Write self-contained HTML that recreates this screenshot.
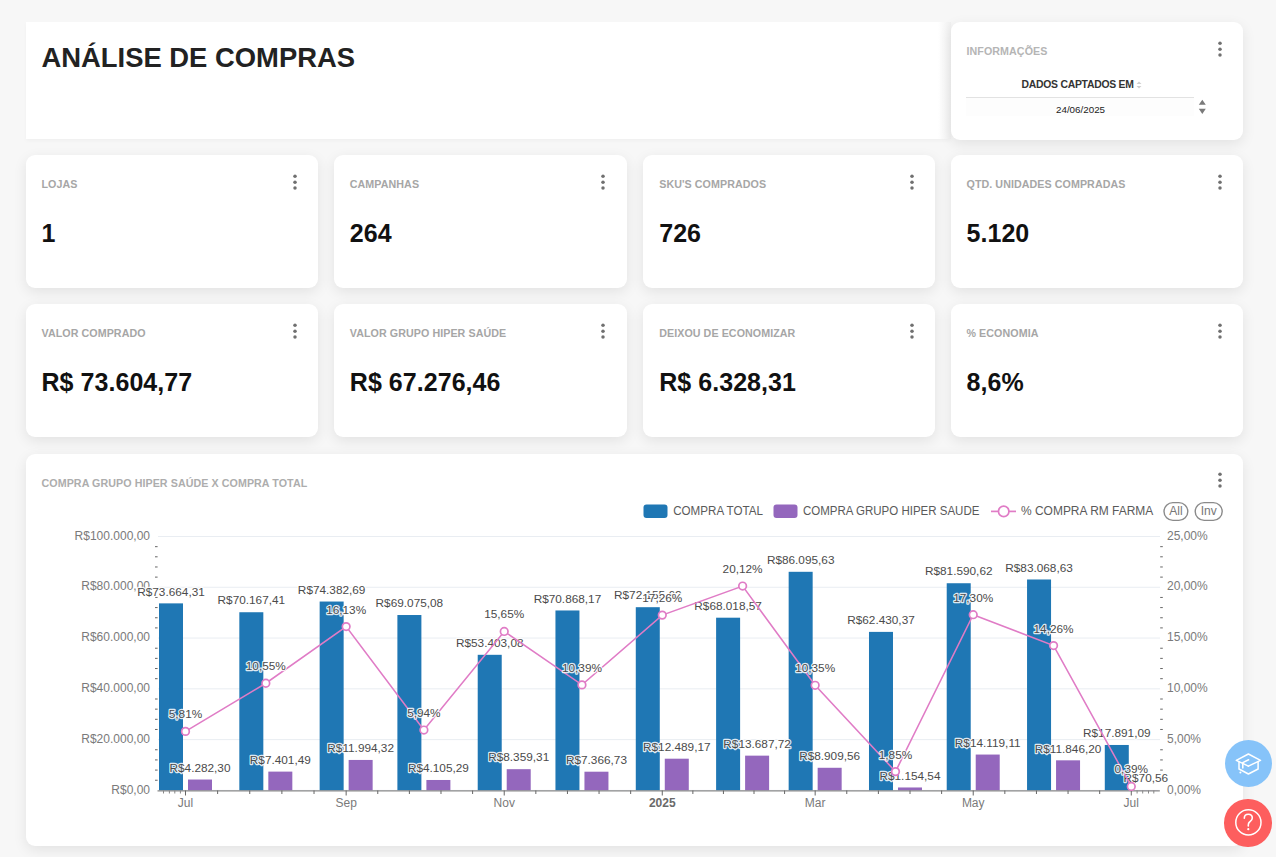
<!DOCTYPE html>
<html><head><meta charset="utf-8">
<style>
html,body{margin:0;padding:0;}
body{width:1276px;height:857px;overflow:hidden;background:#f7f7f7;font-family:"Liberation Sans",sans-serif;position:relative;}
.card{position:absolute;background:#fff;border-radius:9px;box-shadow:0 4px 14px rgba(0,0,0,0.085);}
.kpi{width:292.3px;height:133px;}
.ct{position:absolute;left:15.5px;top:23px;font-size:10.7px;font-weight:bold;color:#a6a6a6;letter-spacing:0.07px;line-height:12px;white-space:nowrap;}
.kb{position:absolute;left:266px;top:19px;}
.val{position:absolute;left:15.5px;top:63px;font-size:25px;font-weight:bold;color:#111;line-height:30px;white-space:nowrap;letter-spacing:0.05px;}
#title{left:26px;top:22px;width:925px;height:117px;border-radius:0;box-shadow:0 2px 4px rgba(0,0,0,0.03);}
#title h1{margin:0;position:absolute;left:15.5px;top:20px;font-size:27.4px;line-height:32px;color:#222;font-weight:bold;white-space:nowrap;}
#info{left:951px;top:22px;width:292px;height:118px;}
#chart{left:26px;top:454px;width:1217px;height:392px;}
svg.chart{position:absolute;left:0;top:0;}
.ax{font-size:12px;fill:#7a7a7a;}
.lg{font-size:12px;fill:#5a5a5a;}
.pill{font-size:12px;fill:#777;}
.ax.b{font-weight:bold;fill:#6a6a6a;}
.dl{font-size:11.8px;fill:#4b4b4b;stroke:rgba(255,255,255,0.85);stroke-width:2.4px;paint-order:stroke;stroke-linejoin:round;}
.fab{position:absolute;width:47px;height:47px;border-radius:50%;}
#dh{position:absolute;left:70.5px;top:56.5px;letter-spacing:-0.25px;font-size:10.4px;font-weight:bold;color:#333;line-height:12px;white-space:nowrap;}
#dline{position:absolute;left:15px;top:75px;width:228px;height:1px;background:#e2e2e2;}
#drow{position:absolute;left:15px;top:76px;width:228px;height:18px;background:#fdfdfd;}
#dval{position:absolute;left:105px;top:82px;font-size:9.8px;color:#222;line-height:12px;white-space:nowrap;}
</style></head><body>
<div class="card" id="title"><h1>ANÁLISE DE COMPRAS</h1><div style="position:absolute;left:912px;top:0;width:13px;bottom:0;background:linear-gradient(to right,rgba(242,242,242,0),#f0f0f0)"></div></div>
<div class="card" id="info">
  <div class="ct" style="top:23px;color:#b5b5b5">INFORMAÇÕES</div><svg class="kb" width="6" height="17" viewBox="0 0 6 17"><circle cx="3" cy="2.3" r="1.75" fill="#707070"/><circle cx="3" cy="8.2" r="1.75" fill="#707070"/><circle cx="3" cy="14.1" r="1.75" fill="#707070"/></svg>
  <div id="dh">DADOS CAPTADOS EM</div>
  <svg style="position:absolute;left:184px;top:58px" width="8" height="10" viewBox="0 0 8 10"><path d="M4 1.5 L6.5 4 L1.5 4 Z M4 8.5 L6.5 6 L1.5 6 Z" fill="#d0d0d0"/></svg>
  <div id="dline"></div>
  <div id="drow"></div>
  <div id="dval">24/06/2025</div>
  <svg style="position:absolute;left:246px;top:77px" width="10" height="16" viewBox="0 0 10 16"><path d="M5.3 0.8 L8.8 5.7 L1.8 5.7 Z M5.3 15 L8.8 9.8 L1.8 9.8 Z" fill="#7a7a7a"/></svg>
</div>
<div class="card kpi" style="left:26px;top:155px"><div class="ct">LOJAS</div><svg class="kb" width="6" height="17" viewBox="0 0 6 17"><circle cx="3" cy="2.3" r="1.75" fill="#707070"/><circle cx="3" cy="8.2" r="1.75" fill="#707070"/><circle cx="3" cy="14.1" r="1.75" fill="#707070"/></svg><div class="val">1</div></div>
<div class="card kpi" style="left:334.3px;top:155px"><div class="ct">CAMPANHAS</div><svg class="kb" width="6" height="17" viewBox="0 0 6 17"><circle cx="3" cy="2.3" r="1.75" fill="#707070"/><circle cx="3" cy="8.2" r="1.75" fill="#707070"/><circle cx="3" cy="14.1" r="1.75" fill="#707070"/></svg><div class="val">264</div></div>
<div class="card kpi" style="left:642.5px;top:155px"><div class="ct" style="margin-left:1.2px">SKU'S COMPRADOS</div><svg class="kb" width="6" height="17" viewBox="0 0 6 17"><circle cx="3" cy="2.3" r="1.75" fill="#707070"/><circle cx="3" cy="8.2" r="1.75" fill="#707070"/><circle cx="3" cy="14.1" r="1.75" fill="#707070"/></svg><div class="val" style="margin-left:1.2px">726</div></div>
<div class="card kpi" style="left:951px;top:155px"><div class="ct">QTD. UNIDADES COMPRADAS</div><svg class="kb" width="6" height="17" viewBox="0 0 6 17"><circle cx="3" cy="2.3" r="1.75" fill="#707070"/><circle cx="3" cy="8.2" r="1.75" fill="#707070"/><circle cx="3" cy="14.1" r="1.75" fill="#707070"/></svg><div class="val">5.120</div></div>
<div class="card kpi" style="left:26px;top:304.2px"><div class="ct">VALOR COMPRADO</div><svg class="kb" width="6" height="17" viewBox="0 0 6 17"><circle cx="3" cy="2.3" r="1.75" fill="#707070"/><circle cx="3" cy="8.2" r="1.75" fill="#707070"/><circle cx="3" cy="14.1" r="1.75" fill="#707070"/></svg><div class="val">R$ 73.604,77</div></div>
<div class="card kpi" style="left:334.3px;top:304.2px"><div class="ct">VALOR GRUPO HIPER SAÚDE</div><svg class="kb" width="6" height="17" viewBox="0 0 6 17"><circle cx="3" cy="2.3" r="1.75" fill="#707070"/><circle cx="3" cy="8.2" r="1.75" fill="#707070"/><circle cx="3" cy="14.1" r="1.75" fill="#707070"/></svg><div class="val">R$ 67.276,46</div></div>
<div class="card kpi" style="left:642.5px;top:304.2px"><div class="ct" style="margin-left:1.2px">DEIXOU DE ECONOMIZAR</div><svg class="kb" width="6" height="17" viewBox="0 0 6 17"><circle cx="3" cy="2.3" r="1.75" fill="#707070"/><circle cx="3" cy="8.2" r="1.75" fill="#707070"/><circle cx="3" cy="14.1" r="1.75" fill="#707070"/></svg><div class="val" style="margin-left:1.2px">R$ 6.328,31</div></div>
<div class="card kpi" style="left:951px;top:304.2px"><div class="ct">% ECONOMIA</div><svg class="kb" width="6" height="17" viewBox="0 0 6 17"><circle cx="3" cy="2.3" r="1.75" fill="#707070"/><circle cx="3" cy="8.2" r="1.75" fill="#707070"/><circle cx="3" cy="14.1" r="1.75" fill="#707070"/></svg><div class="val">8,6%</div></div>
<div class="card" id="chart"><div class="ct" style="top:23px;color:#adadad">COMPRA GRUPO HIPER SAÚDE X COMPRA TOTAL</div><svg class="kb" style="top:18.4px;left:1190.8px" width="6" height="17" viewBox="0 0 6 17"><circle cx="3" cy="2.3" r="1.75" fill="#707070"/><circle cx="3" cy="8.2" r="1.75" fill="#707070"/><circle cx="3" cy="14.1" r="1.75" fill="#707070"/></svg></div>
<div class="fab" style="left:1224.5px;top:740px;background:#86c3f9"></div>
<div class="fab" style="left:1224.2px;top:799px;width:47.5px;height:47.5px;background:#fd5e5e"></div>
<svg class="chart" width="1276" height="857" viewBox="0 0 1276 857" style="position:absolute;left:0;top:0">
<line x1="158" y1="790.40" x2="1160" y2="790.40" stroke="#e9edf2" stroke-width="1"/>
<line x1="158" y1="739.62" x2="1160" y2="739.62" stroke="#e9edf2" stroke-width="1"/>
<line x1="158" y1="688.84" x2="1160" y2="688.84" stroke="#e9edf2" stroke-width="1"/>
<line x1="158" y1="638.06" x2="1160" y2="638.06" stroke="#e9edf2" stroke-width="1"/>
<line x1="158" y1="587.28" x2="1160" y2="587.28" stroke="#e9edf2" stroke-width="1"/>
<line x1="158" y1="536.50" x2="1160" y2="536.50" stroke="#e9edf2" stroke-width="1"/>
<text x="150" y="793.50" text-anchor="end" class="ax">R$0,00</text>
<text x="1167" y="793.50" text-anchor="start" class="ax">0,00%</text>
<text x="150" y="742.72" text-anchor="end" class="ax">R$20.000,00</text>
<text x="1167" y="742.72" text-anchor="start" class="ax">5,00%</text>
<text x="150" y="691.94" text-anchor="end" class="ax">R$40.000,00</text>
<text x="1167" y="691.94" text-anchor="start" class="ax">10,00%</text>
<text x="150" y="641.16" text-anchor="end" class="ax">R$60.000,00</text>
<text x="1167" y="641.16" text-anchor="start" class="ax">15,00%</text>
<text x="150" y="590.38" text-anchor="end" class="ax">R$80.000,00</text>
<text x="1167" y="590.38" text-anchor="start" class="ax">20,00%</text>
<text x="150" y="539.60" text-anchor="end" class="ax">R$100.000,00</text>
<text x="1167" y="539.60" text-anchor="start" class="ax">25,00%</text>
<line x1="155" y1="780.24" x2="157.6" y2="780.24" stroke="#666" stroke-width="1"/>
<line x1="1160.2" y1="780.24" x2="1162.8" y2="780.24" stroke="#666" stroke-width="1"/>
<line x1="155" y1="770.09" x2="157.6" y2="770.09" stroke="#666" stroke-width="1"/>
<line x1="1160.2" y1="770.09" x2="1162.8" y2="770.09" stroke="#666" stroke-width="1"/>
<line x1="155" y1="759.93" x2="157.6" y2="759.93" stroke="#666" stroke-width="1"/>
<line x1="1160.2" y1="759.93" x2="1162.8" y2="759.93" stroke="#666" stroke-width="1"/>
<line x1="155" y1="749.78" x2="157.6" y2="749.78" stroke="#666" stroke-width="1"/>
<line x1="1160.2" y1="749.78" x2="1162.8" y2="749.78" stroke="#666" stroke-width="1"/>
<line x1="155" y1="729.46" x2="157.6" y2="729.46" stroke="#666" stroke-width="1"/>
<line x1="1160.2" y1="729.46" x2="1162.8" y2="729.46" stroke="#666" stroke-width="1"/>
<line x1="155" y1="719.31" x2="157.6" y2="719.31" stroke="#666" stroke-width="1"/>
<line x1="1160.2" y1="719.31" x2="1162.8" y2="719.31" stroke="#666" stroke-width="1"/>
<line x1="155" y1="709.15" x2="157.6" y2="709.15" stroke="#666" stroke-width="1"/>
<line x1="1160.2" y1="709.15" x2="1162.8" y2="709.15" stroke="#666" stroke-width="1"/>
<line x1="155" y1="699.00" x2="157.6" y2="699.00" stroke="#666" stroke-width="1"/>
<line x1="1160.2" y1="699.00" x2="1162.8" y2="699.00" stroke="#666" stroke-width="1"/>
<line x1="155" y1="678.68" x2="157.6" y2="678.68" stroke="#666" stroke-width="1"/>
<line x1="1160.2" y1="678.68" x2="1162.8" y2="678.68" stroke="#666" stroke-width="1"/>
<line x1="155" y1="668.53" x2="157.6" y2="668.53" stroke="#666" stroke-width="1"/>
<line x1="1160.2" y1="668.53" x2="1162.8" y2="668.53" stroke="#666" stroke-width="1"/>
<line x1="155" y1="658.37" x2="157.6" y2="658.37" stroke="#666" stroke-width="1"/>
<line x1="1160.2" y1="658.37" x2="1162.8" y2="658.37" stroke="#666" stroke-width="1"/>
<line x1="155" y1="648.22" x2="157.6" y2="648.22" stroke="#666" stroke-width="1"/>
<line x1="1160.2" y1="648.22" x2="1162.8" y2="648.22" stroke="#666" stroke-width="1"/>
<line x1="155" y1="627.90" x2="157.6" y2="627.90" stroke="#666" stroke-width="1"/>
<line x1="1160.2" y1="627.90" x2="1162.8" y2="627.90" stroke="#666" stroke-width="1"/>
<line x1="155" y1="617.75" x2="157.6" y2="617.75" stroke="#666" stroke-width="1"/>
<line x1="1160.2" y1="617.75" x2="1162.8" y2="617.75" stroke="#666" stroke-width="1"/>
<line x1="155" y1="607.59" x2="157.6" y2="607.59" stroke="#666" stroke-width="1"/>
<line x1="1160.2" y1="607.59" x2="1162.8" y2="607.59" stroke="#666" stroke-width="1"/>
<line x1="155" y1="597.44" x2="157.6" y2="597.44" stroke="#666" stroke-width="1"/>
<line x1="1160.2" y1="597.44" x2="1162.8" y2="597.44" stroke="#666" stroke-width="1"/>
<line x1="155" y1="577.12" x2="157.6" y2="577.12" stroke="#666" stroke-width="1"/>
<line x1="1160.2" y1="577.12" x2="1162.8" y2="577.12" stroke="#666" stroke-width="1"/>
<line x1="155" y1="566.97" x2="157.6" y2="566.97" stroke="#666" stroke-width="1"/>
<line x1="1160.2" y1="566.97" x2="1162.8" y2="566.97" stroke="#666" stroke-width="1"/>
<line x1="155" y1="556.81" x2="157.6" y2="556.81" stroke="#666" stroke-width="1"/>
<line x1="1160.2" y1="556.81" x2="1162.8" y2="556.81" stroke="#666" stroke-width="1"/>
<line x1="155" y1="546.66" x2="157.6" y2="546.66" stroke="#666" stroke-width="1"/>
<line x1="1160.2" y1="546.66" x2="1162.8" y2="546.66" stroke="#666" stroke-width="1"/>
<rect x="159.00" y="603.37" width="24" height="187.03" fill="#1f77b4"/>
<rect x="188.00" y="779.53" width="24" height="10.87" fill="#9467bd"/>
<rect x="239.33" y="612.24" width="24" height="178.16" fill="#1f77b4"/>
<rect x="268.33" y="771.61" width="24" height="18.79" fill="#9467bd"/>
<rect x="319.65" y="601.54" width="24" height="188.86" fill="#1f77b4"/>
<rect x="348.65" y="759.95" width="24" height="30.45" fill="#9467bd"/>
<rect x="397.39" y="615.02" width="24" height="175.38" fill="#1f77b4"/>
<rect x="426.39" y="779.98" width="24" height="10.42" fill="#9467bd"/>
<rect x="477.72" y="654.81" width="24" height="135.59" fill="#1f77b4"/>
<rect x="506.72" y="769.18" width="24" height="21.22" fill="#9467bd"/>
<rect x="555.45" y="610.47" width="24" height="179.93" fill="#1f77b4"/>
<rect x="584.45" y="771.70" width="24" height="18.70" fill="#9467bd"/>
<rect x="635.78" y="607.20" width="24" height="183.20" fill="#1f77b4"/>
<rect x="664.78" y="758.69" width="24" height="31.71" fill="#9467bd"/>
<rect x="716.11" y="617.70" width="24" height="172.70" fill="#1f77b4"/>
<rect x="745.11" y="755.65" width="24" height="34.75" fill="#9467bd"/>
<rect x="788.66" y="571.80" width="24" height="218.60" fill="#1f77b4"/>
<rect x="817.66" y="767.78" width="24" height="22.62" fill="#9467bd"/>
<rect x="868.99" y="631.89" width="24" height="158.51" fill="#1f77b4"/>
<rect x="897.99" y="787.47" width="24" height="2.93" fill="#9467bd"/>
<rect x="946.72" y="583.24" width="24" height="207.16" fill="#1f77b4"/>
<rect x="975.72" y="754.55" width="24" height="35.85" fill="#9467bd"/>
<rect x="1027.05" y="579.49" width="24" height="210.91" fill="#1f77b4"/>
<rect x="1056.05" y="760.32" width="24" height="30.08" fill="#9467bd"/>
<rect x="1104.79" y="744.97" width="24" height="45.43" fill="#1f77b4"/>
<rect x="1133.79" y="790.22" width="24" height="0.18" fill="#9467bd"/>
<line x1="157.5" y1="790.9" x2="1159.8" y2="790.9" stroke="#8a8a8a" stroke-width="1.4"/>
<line x1="185.50" y1="790.5" x2="185.50" y2="795.5" stroke="#666" stroke-width="1"/>
<line x1="217.63" y1="790.5" x2="217.63" y2="794" stroke="#666" stroke-width="1"/>
<line x1="249.76" y1="790.5" x2="249.76" y2="794" stroke="#666" stroke-width="1"/>
<line x1="281.89" y1="790.5" x2="281.89" y2="794" stroke="#666" stroke-width="1"/>
<line x1="314.02" y1="790.5" x2="314.02" y2="794" stroke="#666" stroke-width="1"/>
<line x1="346.15" y1="790.5" x2="346.15" y2="795.5" stroke="#666" stroke-width="1"/>
<line x1="377.77" y1="790.5" x2="377.77" y2="794" stroke="#666" stroke-width="1"/>
<line x1="409.38" y1="790.5" x2="409.38" y2="794" stroke="#666" stroke-width="1"/>
<line x1="440.99" y1="790.5" x2="440.99" y2="794" stroke="#666" stroke-width="1"/>
<line x1="472.60" y1="790.5" x2="472.60" y2="794" stroke="#666" stroke-width="1"/>
<line x1="504.22" y1="790.5" x2="504.22" y2="795.5" stroke="#666" stroke-width="1"/>
<line x1="535.83" y1="790.5" x2="535.83" y2="794" stroke="#666" stroke-width="1"/>
<line x1="567.44" y1="790.5" x2="567.44" y2="794" stroke="#666" stroke-width="1"/>
<line x1="599.06" y1="790.5" x2="599.06" y2="794" stroke="#666" stroke-width="1"/>
<line x1="630.67" y1="790.5" x2="630.67" y2="794" stroke="#666" stroke-width="1"/>
<line x1="662.28" y1="790.5" x2="662.28" y2="795.5" stroke="#666" stroke-width="1"/>
<line x1="692.86" y1="790.5" x2="692.86" y2="794" stroke="#666" stroke-width="1"/>
<line x1="723.43" y1="790.5" x2="723.43" y2="794" stroke="#666" stroke-width="1"/>
<line x1="754.01" y1="790.5" x2="754.01" y2="794" stroke="#666" stroke-width="1"/>
<line x1="784.59" y1="790.5" x2="784.59" y2="794" stroke="#666" stroke-width="1"/>
<line x1="815.16" y1="790.5" x2="815.16" y2="795.5" stroke="#666" stroke-width="1"/>
<line x1="846.77" y1="790.5" x2="846.77" y2="794" stroke="#666" stroke-width="1"/>
<line x1="878.39" y1="790.5" x2="878.39" y2="794" stroke="#666" stroke-width="1"/>
<line x1="910.00" y1="790.5" x2="910.00" y2="794" stroke="#666" stroke-width="1"/>
<line x1="941.61" y1="790.5" x2="941.61" y2="794" stroke="#666" stroke-width="1"/>
<line x1="973.22" y1="790.5" x2="973.22" y2="795.5" stroke="#666" stroke-width="1"/>
<line x1="1004.84" y1="790.5" x2="1004.84" y2="794" stroke="#666" stroke-width="1"/>
<line x1="1036.45" y1="790.5" x2="1036.45" y2="794" stroke="#666" stroke-width="1"/>
<line x1="1068.06" y1="790.5" x2="1068.06" y2="794" stroke="#666" stroke-width="1"/>
<line x1="1099.68" y1="790.5" x2="1099.68" y2="794" stroke="#666" stroke-width="1"/>
<line x1="1131.29" y1="790.5" x2="1131.29" y2="795.5" stroke="#666" stroke-width="1"/>
<line x1="163.50" y1="790.5" x2="163.50" y2="793.5" stroke="#888" stroke-width="1"/>
<line x1="169.40" y1="790.5" x2="169.40" y2="793.5" stroke="#888" stroke-width="1"/>
<line x1="174.80" y1="790.5" x2="174.80" y2="793.5" stroke="#888" stroke-width="1"/>
<line x1="180.40" y1="790.5" x2="180.40" y2="793.5" stroke="#888" stroke-width="1"/>
<line x1="1137.10" y1="790.5" x2="1137.10" y2="793.5" stroke="#888" stroke-width="1"/>
<line x1="1142.70" y1="790.5" x2="1142.70" y2="793.5" stroke="#888" stroke-width="1"/>
<line x1="1148.50" y1="790.5" x2="1148.50" y2="793.5" stroke="#888" stroke-width="1"/>
<line x1="1153.80" y1="790.5" x2="1153.80" y2="793.5" stroke="#888" stroke-width="1"/>
<text x="185.50" y="807" text-anchor="middle" class="ax">Jul</text>
<text x="346.15" y="807" text-anchor="middle" class="ax">Sep</text>
<text x="504.22" y="807" text-anchor="middle" class="ax">Nov</text>
<text x="662.28" y="807" text-anchor="middle" class="ax b">2025</text>
<text x="815.16" y="807" text-anchor="middle" class="ax">Mar</text>
<text x="973.22" y="807" text-anchor="middle" class="ax">May</text>
<text x="1131.29" y="807" text-anchor="middle" class="ax">Jul</text>
<text x="171.00" y="595.57" text-anchor="middle" class="dl">R$73.664,31</text>
<text x="200.00" y="771.73" text-anchor="middle" class="dl">R$4.282,30</text>
<text x="251.33" y="604.44" text-anchor="middle" class="dl">R$70.167,41</text>
<text x="280.33" y="763.81" text-anchor="middle" class="dl">R$7.401,49</text>
<text x="331.65" y="593.74" text-anchor="middle" class="dl">R$74.382,69</text>
<text x="360.65" y="752.15" text-anchor="middle" class="dl">R$11.994,32</text>
<text x="409.39" y="607.22" text-anchor="middle" class="dl">R$69.075,08</text>
<text x="438.39" y="772.18" text-anchor="middle" class="dl">R$4.105,29</text>
<text x="489.72" y="647.01" text-anchor="middle" class="dl">R$53.403,08</text>
<text x="518.72" y="761.38" text-anchor="middle" class="dl">R$8.359,31</text>
<text x="567.45" y="602.67" text-anchor="middle" class="dl">R$70.868,17</text>
<text x="596.45" y="763.90" text-anchor="middle" class="dl">R$7.366,73</text>
<text x="647.78" y="599.40" text-anchor="middle" class="dl">R$72.155,62</text>
<text x="676.78" y="750.89" text-anchor="middle" class="dl">R$12.489,17</text>
<text x="728.11" y="609.90" text-anchor="middle" class="dl">R$68.018,57</text>
<text x="757.11" y="747.85" text-anchor="middle" class="dl">R$13.687,72</text>
<text x="800.66" y="564.00" text-anchor="middle" class="dl">R$86.095,63</text>
<text x="829.66" y="759.98" text-anchor="middle" class="dl">R$8.909,56</text>
<text x="880.99" y="624.09" text-anchor="middle" class="dl">R$62.430,37</text>
<text x="909.99" y="779.67" text-anchor="middle" class="dl">R$1.154,54</text>
<text x="958.72" y="575.44" text-anchor="middle" class="dl">R$81.590,62</text>
<text x="987.72" y="746.75" text-anchor="middle" class="dl">R$14.119,11</text>
<text x="1039.05" y="571.69" text-anchor="middle" class="dl">R$83.068,63</text>
<text x="1068.05" y="752.52" text-anchor="middle" class="dl">R$11.846,20</text>
<text x="1116.79" y="737.17" text-anchor="middle" class="dl">R$17.891,09</text>
<text x="1145.79" y="782.42" text-anchor="middle" class="dl">R$70,56</text>
<polyline points="185.50,731.39 265.83,683.25 346.15,626.58 423.89,730.07 504.22,631.46 581.95,684.88 662.28,615.11 742.61,586.06 815.16,685.29 895.49,771.61 973.22,614.70 1053.55,645.58 1131.29,786.44" fill="none" stroke="#e07cc6" stroke-width="1.55"/>
<circle cx="185.50" cy="731.39" r="3.8" fill="#fff" stroke="#e07cc6" stroke-width="1.7"/>
<circle cx="265.83" cy="683.25" r="3.8" fill="#fff" stroke="#e07cc6" stroke-width="1.7"/>
<circle cx="346.15" cy="626.58" r="3.8" fill="#fff" stroke="#e07cc6" stroke-width="1.7"/>
<circle cx="423.89" cy="730.07" r="3.8" fill="#fff" stroke="#e07cc6" stroke-width="1.7"/>
<circle cx="504.22" cy="631.46" r="3.8" fill="#fff" stroke="#e07cc6" stroke-width="1.7"/>
<circle cx="581.95" cy="684.88" r="3.8" fill="#fff" stroke="#e07cc6" stroke-width="1.7"/>
<circle cx="662.28" cy="615.11" r="3.8" fill="#fff" stroke="#e07cc6" stroke-width="1.7"/>
<circle cx="742.61" cy="586.06" r="3.8" fill="#fff" stroke="#e07cc6" stroke-width="1.7"/>
<circle cx="815.16" cy="685.29" r="3.8" fill="#fff" stroke="#e07cc6" stroke-width="1.7"/>
<circle cx="895.49" cy="771.61" r="3.8" fill="#fff" stroke="#e07cc6" stroke-width="1.7"/>
<circle cx="973.22" cy="614.70" r="3.8" fill="#fff" stroke="#e07cc6" stroke-width="1.7"/>
<circle cx="1053.55" cy="645.58" r="3.8" fill="#fff" stroke="#e07cc6" stroke-width="1.7"/>
<circle cx="1131.29" cy="786.44" r="3.8" fill="#fff" stroke="#e07cc6" stroke-width="1.7"/>
<text x="185.50" y="718.39" text-anchor="middle" class="dl">5,81%</text>
<text x="265.83" y="670.25" text-anchor="middle" class="dl">10,55%</text>
<text x="346.15" y="613.58" text-anchor="middle" class="dl">16,13%</text>
<text x="423.89" y="717.07" text-anchor="middle" class="dl">5,94%</text>
<text x="504.22" y="618.46" text-anchor="middle" class="dl">15,65%</text>
<text x="581.95" y="671.88" text-anchor="middle" class="dl">10,39%</text>
<text x="662.28" y="602.11" text-anchor="middle" class="dl">17,26%</text>
<text x="742.61" y="573.06" text-anchor="middle" class="dl">20,12%</text>
<text x="815.16" y="672.29" text-anchor="middle" class="dl">10,35%</text>
<text x="895.49" y="758.61" text-anchor="middle" class="dl">1,85%</text>
<text x="973.22" y="601.70" text-anchor="middle" class="dl">17,30%</text>
<text x="1053.55" y="632.58" text-anchor="middle" class="dl">14,26%</text>
<text x="1131.29" y="773.44" text-anchor="middle" class="dl">0,39%</text>
<rect x="643.5" y="504.5" width="24" height="13.5" rx="3" fill="#1f77b4"/>
<text x="673.2" y="515" class="lg" textLength="89.7" lengthAdjust="spacingAndGlyphs">COMPRA TOTAL</text>
<rect x="773.5" y="504.5" width="24" height="13.5" rx="3" fill="#9467bd"/>
<text x="803" y="515" class="lg" textLength="176.4" lengthAdjust="spacingAndGlyphs">COMPRA GRUPO HIPER SAUDE</text>
<line x1="991" y1="511.4" x2="1016" y2="511.4" stroke="#e07cc6" stroke-width="1.7"/>
<circle cx="1003.7" cy="511.4" r="5.2" fill="#fff" stroke="#e07cc6" stroke-width="1.7"/>
<text x="1021" y="515" class="lg" textLength="132.3" lengthAdjust="spacingAndGlyphs">% COMPRA RM FARMA</text>
<rect x="1164" y="502.6" width="23.8" height="17.8" rx="8.9" fill="#fff" stroke="#8a8a8a" stroke-width="1.4"/>
<text x="1176" y="515" class="pill" text-anchor="middle">All</text>
<rect x="1195.2" y="502.6" width="27" height="17.8" rx="8.9" fill="#fff" stroke="#8a8a8a" stroke-width="1.4"/>
<text x="1208.7" y="515" class="pill" text-anchor="middle">Inv</text>
<g fill="none" stroke="#fff" stroke-width="1.5" stroke-linejoin="round" stroke-linecap="round"><path d="M1236.3 760.3 L1248.4 754 L1260.5 760.3 L1248.4 766.2 Z"/><path d="M1239 761.8 L1239 769 L1248.4 774 L1258.1 769 L1258.1 761.8"/><path d="M1248.4 766.2 L1248.4 766.2"/><path d="M1248.6 759.8 L1242.8 762.6 L1242.8 768"/></g><circle cx="1240.4" cy="772.5" r="1" fill="#fff"/>
<circle cx="1248.4" cy="822.4" r="12.6" fill="none" stroke="#fff" stroke-width="1.5"/>
<path d="M1244.3 818.2 C1244.3 815.7 1246.1 814.3 1248.3 814.3 C1250.6 814.3 1252.3 815.9 1252.3 818.1 C1252.3 820.2 1250.9 821 1249.6 822 C1248.6 822.8 1248.3 823.6 1248.3 825 L1248.3 826" fill="none" stroke="#fff" stroke-width="1.6" stroke-linecap="round"/>
<circle cx="1248.3" cy="829.2" r="1.1" fill="#fff"/>
</svg>
</body></html>
